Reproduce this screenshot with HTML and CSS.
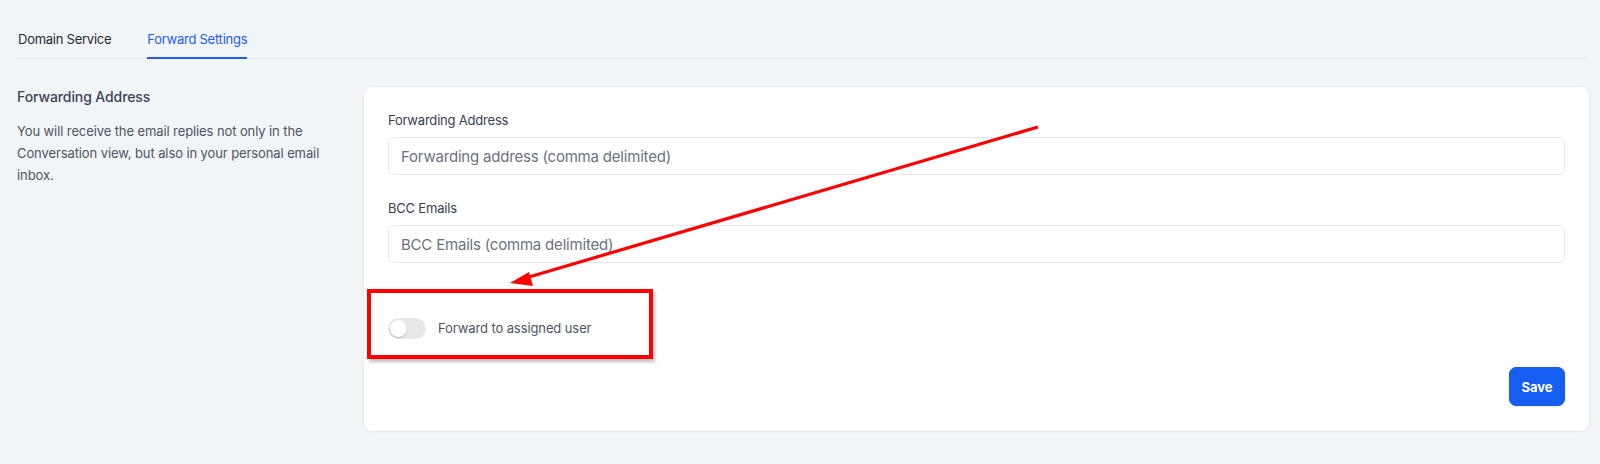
FILE: index.html
```html
<!DOCTYPE html>
<html lang="en">
<head>
<meta charset="utf-8">
<title>Forward Settings</title>
<link rel="stylesheet" href="styles.css">
</head>
<body>
<div class="page">
  <nav class="tabs">
    <div class="tab">Domain Service</div>
    <div class="tab active">Forward Settings</div>
  </nav>
  <div class="content">
    <aside class="intro">
      <h2 class="intro-title">Forwarding Address</h2>
      <p class="intro-text">You will receive the email replies not only in the Conversation view, but also in your personal email inbox.</p>
    </aside>
    <section class="card">
      <div class="field">
        <label class="field-label">Forwarding Address</label>
        <input class="field-input" type="text" placeholder="Forwarding address (comma delimited)">
      </div>
      <div class="field">
        <label class="field-label">BCC Emails</label>
        <input class="field-input" type="text" placeholder="BCC Emails (comma delimited)">
      </div>
      <div class="toggle-row">
        <span class="toggle"><span class="knob"></span></span>
        <span class="toggle-label">Forward to assigned user</span>
      </div>
      <div class="actions">
        <button class="btn-save">Save</button>
      </div>
      <div class="highlight-box"></div>
      <svg class="arrow" width="700" height="200" viewBox="0 0 700 200">
        <line x1="674" y1="40" x2="165" y2="190" stroke="#ff0000" stroke-width="3.2"/>
        <polygon points="146,196 165,185 169,199" fill="#ff0000"/>
      </svg>
    </section>
  </div>
</div>
</body>
</html>
```
FILE: styles.css
```css
* { box-sizing: border-box; }
html, body { margin: 0; padding: 0; }
body {
  background: #f2f5f8;
  font-family: Inter, "Open Sans", "Liberation Sans", sans-serif;
  color: #1f2937;
  width: 1600px;
  height: 464px;
  overflow: hidden;
}
.page {
  padding: 20px 11px 0 17px;
}
.tabs {
  display: flex;
  gap: 36px;
  border-bottom: 1px solid #e6eaef;
  height: 39px;
  padding-left: 1px;
}
.tab {
  font-size: 13px;
  line-height: 18px;
  padding-top: 10px;
  color: #1f2937;
  height: 39px;
  letter-spacing: -0.25px;
}
.tab.active {
  color: #1d5cf5;
  border-bottom: 2px solid #1d5cf5;
}
.content {
  display: flex;
  padding-top: 28px;
}
.intro {
  width: 347px;
  flex: none;
  padding-right: 16px;
}
.intro-title {
  margin: 0;
  font-size: 14px;
  font-weight: 500;
  line-height: 20px;
  color: #3a4454;
  letter-spacing: -0.1px;
}
.intro-text {
  margin: 13px 0 0;
  font-size: 13px;
  line-height: 22px;
  color: #4b5563;
  letter-spacing: -0.1px;
}
.card {
  position: relative;
  flex: 1;
  background: #ffffff;
  border-radius: 8px;
  box-shadow: 0 0 0 1px #e7eaee, 0 1px 2px rgba(0,0,0,0.06);
  padding: 23px 24px 24px;
  height: 344px;
}
.field { display: flex; flex-direction: column; }
.field + .field { margin-top: 23px; }
.field-label {
  font-size: 13px;
  line-height: 20px;
  color: #374151;
  margin-bottom: 7px;
  letter-spacing: -0.2px;
}
.field-input {
  height: 38px;
  border: 1px solid #e3e6ea;
  border-radius: 6px;
  padding: 0 12px;
  font-family: inherit;
  font-size: 15px;
  letter-spacing: -0.2px;
  color: #111827;
  outline: none;
  background: #fff;
}
.field-input::placeholder { color: #6b7280; }
.toggle-row {
  display: flex;
  align-items: center;
  margin-top: 54px;
  height: 22px;
}
.toggle {
  width: 38px;
  height: 21px;
  border-radius: 11px;
  background: #e7e8ea;
  position: relative;
  flex: none;
}
.knob {
  position: absolute;
  left: 2px;
  top: 2px;
  width: 17px;
  height: 17px;
  border-radius: 50%;
  background: #fff;
  box-shadow: 0 1px 2px rgba(0,0,0,0.2);
}
.toggle-label {
  margin-left: 12px;
  font-size: 13px;
  color: #4b5563;
  letter-spacing: -0.1px;
}
.actions {
  display: flex;
  justify-content: flex-end;
  margin-top: 28px;
}
.btn-save {
  width: 56px;
  height: 39px;
  border: 1px solid #155eef;
  border-radius: 7px;
  background: #155eef;
  color: #fff;
  font-family: inherit;
  font-size: 13px;
  font-weight: 700;
  box-shadow: 0 1px 2px rgba(16,24,40,0.1);
}
.highlight-box {
  position: absolute;
  left: 3px;
  top: 202px;
  width: 286px;
  height: 70px;
  border: 4px solid #ff0000;
  box-shadow: 2px 3px 3px rgba(0,0,0,0.25);
}
.arrow {
  position: absolute;
  left: 0;
  top: 0;
  pointer-events: none;
}
```
